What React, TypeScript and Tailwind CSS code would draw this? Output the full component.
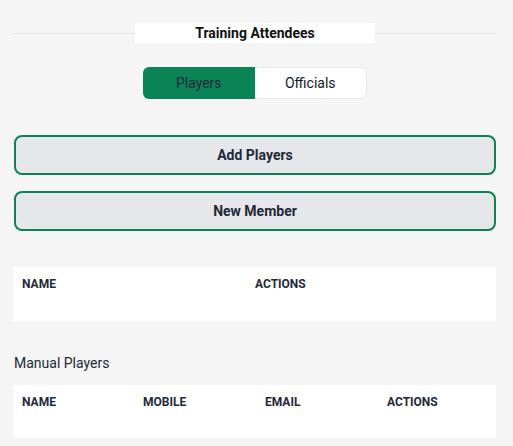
import React from "react";

export default function App() {
  return (
    <div className="min-h-[446px] w-full bg-[#f5f5f5] pl-[14px] pr-[17px] pt-[23px] pb-2" style={{ fontFamily: "Roboto, 'Liberation Sans', sans-serif" }}>
      {/* Title with divider */}
      <div className="relative flex h-[20px] items-center justify-center">
        <div className="absolute left-0 right-0 top-[10px] h-px bg-[#e3e3e3]" />
        <div className="relative z-10 flex h-[20px] w-[240px] items-center justify-center bg-white">
          <span className="text-[14px] font-bold leading-[20px] text-[#111]">Training Attendees</span>
        </div>
      </div>

      {/* Toggle */}
      <div className="mt-[24px] flex justify-center">
        <div className="flex h-[32px] w-[224px] overflow-hidden rounded-[6px] text-[14px]">
          <div className="flex flex-1 items-center justify-center bg-[#0a8457] text-[#1f2937]">Players</div>
          <div className="flex flex-1 items-center justify-center rounded-r-[6px] border border-l-0 border-[#e5e7eb] bg-white text-[#111827]">Officials</div>
        </div>
      </div>

      {/* Buttons */}
      <div className="mt-[36px] flex flex-col gap-[16px]">
        <button className="h-[40px] w-full rounded-[8px] border-2 border-[#0a8457] bg-[#e5e7eb] text-[14px] font-bold text-[#1f2937]">Add Players</button>
        <button className="h-[40px] w-full rounded-[8px] border-2 border-[#0a8457] bg-[#e5e7eb] text-[14px] font-bold text-[#1f2937]">New Member</button>
      </div>

      {/* Table 1 */}
      <div className="mt-[36px] h-[54px] bg-white">
        <div className="flex pt-[9px] text-[12px] font-bold leading-[16px] text-[#1f2937]">
          <div className="w-[233px] pl-[8px]">NAME</div>
          <div className="flex-1 pl-[8px]">ACTIONS</div>
        </div>
      </div>

      {/* Manual Players */}
      <div className="mt-[32px] text-[14px] leading-[20px] text-[#1f2937]">Manual Players</div>

      {/* Table 2 */}
      <div className="mt-[12px] h-[53px] bg-white">
        <div className="flex pt-[9px] text-[12px] font-bold leading-[16px] text-[#1f2937]">
          <div className="w-[121px] pl-[8px]">NAME</div>
          <div className="w-[122px] pl-[8px]">MOBILE</div>
          <div className="w-[122px] pl-[8px]">EMAIL</div>
          <div className="flex-1 pl-[8px]">ACTIONS</div>
        </div>
      </div>
    </div>
  );
}
